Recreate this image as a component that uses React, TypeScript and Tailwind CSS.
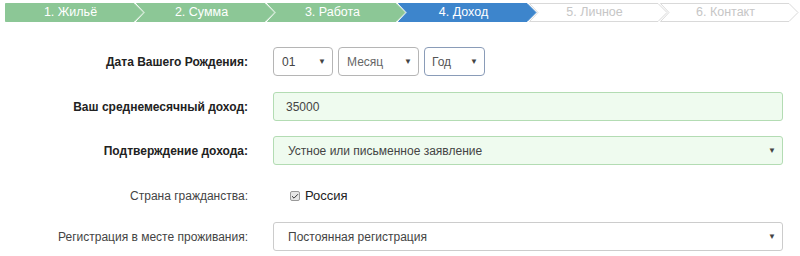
import { Check } from "lucide-react";

type StepState = "done" | "active" | "todo";

const steps: { label: string; state: StepState }[] = [
  { label: "1. Жильё", state: "done" },
  { label: "2. Сумма", state: "done" },
  { label: "3. Работа", state: "done" },
  { label: "4. Доход", state: "active" },
  { label: "5. Личное", state: "todo" },
  { label: "6. Контакт", state: "todo" },
];

const Step = ({ label, state, first }: { label: string; state: StepState; first: boolean }) => {
  const fill = state === "done" ? "#8cc796" : state === "active" ? "#3d85cc" : "#ffffff";
  const stroke = state === "todo" ? "#d9d9d9" : fill;
  const points = first
    ? "0.5,0.5 129,0.5 138,9.5 129,18.5 0.5,18.5"
    : "0.5,0.5 129,0.5 138,9.5 129,18.5 0.5,18.5 9,9.5";
  return (
    <div className={`relative h-[19px] w-[140px] shrink-0 ${first ? "" : "-ml-[9px]"}`}>
      <svg className="absolute inset-0" width="140" height="19" viewBox="0 0 140 19">
        <polygon points={points} fill={fill} stroke={stroke} strokeWidth="1" />
      </svg>
      <div
        className={`relative flex h-full w-[131px] items-center justify-center text-[12.5px] leading-none ${
          state === "todo" ? "text-[#c6c6c6]" : "text-white"
        }`}
      >
        {label}
      </div>
    </div>
  );
};

const Arrow = () => <span className="text-[8px] leading-none text-[#444]">▼</span>;

const Label = ({ children, bold }: { children: string; bold?: boolean }) => (
  <div
    className={`w-[248px] shrink-0 text-right text-[12px] ${
      bold ? "font-bold text-[#222]" : "text-[#444]"
    }`}
  >
    {children}
  </div>
);

export default function App() {
  return (
    <div className="h-[256px] w-[800px] overflow-hidden bg-white font-['Liberation_Sans',Arial,sans-serif]">
      <div className="flex pl-[5px] pt-[3px]">
        {steps.map((s, i) => (
          <Step key={s.label} label={s.label} state={s.state} first={i === 0} />
        ))}
      </div>

      <div className="mt-[25px] flex items-center">
        <Label bold>Дата Вашего Рождения:</Label>
        <div className="ml-[25px] flex gap-[5px]">
          <div className="flex h-[29px] w-[60px] items-center justify-between rounded-[4px] border border-[#b5b5b5] pl-[8px] pr-[6px] text-[12px] text-[#444]">
            <span>01</span>
            <Arrow />
          </div>
          <div className="flex h-[29px] w-[81px] items-center justify-between rounded-[4px] border border-[#b5b5b5] pl-[8px] pr-[6px] text-[12px] text-[#666]">
            <span>Месяц</span>
            <Arrow />
          </div>
          <div className="flex h-[29px] w-[61px] items-center justify-between rounded-[4px] border border-[#8a9cb8] pl-[7px] pr-[6px] text-[12px] text-[#555]">
            <span>Год</span>
            <Arrow />
          </div>
        </div>
      </div>

      <div className="mt-[16px] flex items-center">
        <Label bold>Ваш среднемесячный доход:</Label>
        <div className="ml-[25px] flex h-[29px] w-[510px] items-center rounded-[3px] border border-[#b3dcb3] bg-[#effbef] pl-[12px] text-[12px] text-[#444]">
          35000
        </div>
      </div>

      <div className="mt-[15px] flex items-center">
        <Label bold>Подтверждение дохода:</Label>
        <div className="ml-[25px] flex h-[29px] w-[510px] items-center justify-between rounded-[3px] border border-[#b3dcb3] bg-[#effbef] pl-[14px] pr-[6px] text-[12px] text-[#444]">
          <span>Устное или письменное заявление</span>
          <Arrow />
        </div>
      </div>

      <div className="mt-[21px] flex h-[20px] items-center">
        <Label>Страна гражданства:</Label>
        <div className="ml-[42px] flex items-center gap-[5px] text-[13px] text-[#222]">
          <span className="flex h-[10px] w-[10px] items-center justify-center rounded-[2px] border border-[#999] bg-[#e6e6e6]">
            <Check size={9} strokeWidth={3} className="text-[#333]" />
          </span>
          <span>Россия</span>
        </div>
      </div>

      <div className="mt-[16px] flex items-center">
        <Label>Регистрация в месте проживания:</Label>
        <div className="ml-[25px] flex h-[29px] w-[510px] items-center justify-between rounded-[3px] border border-[#ccc] bg-white pl-[14px] pr-[6px] text-[12px] text-[#444]">
          <span>Постоянная регистрация</span>
          <Arrow />
        </div>
      </div>
    </div>
  );
}
